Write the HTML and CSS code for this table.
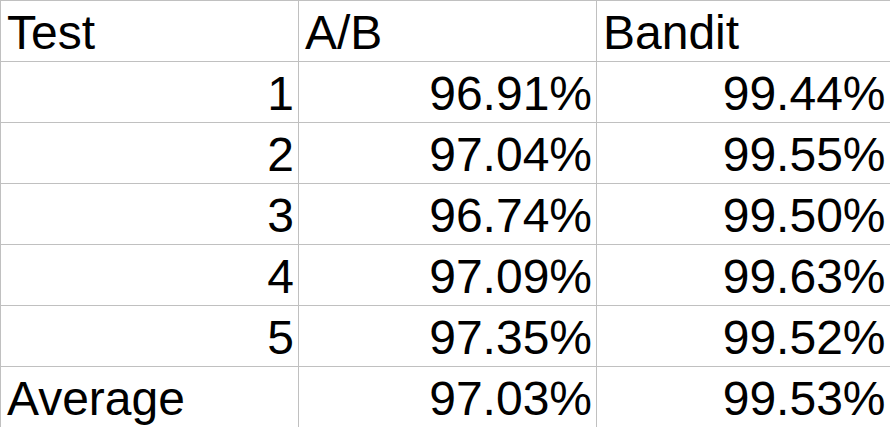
FILE: index.html
```html
<!DOCTYPE html>
<html>
<head>
<meta charset="utf-8">
<link rel="stylesheet" href="styles.css">
</head>
<body>
<table class="sheet">
  <colgroup><col class="col"><col class="col"><col class="col-last"></colgroup>
  <tr><td class="txt">Test</td><td class="txt">A/B</td><td class="txt">Bandit</td></tr>
  <tr><td class="num">1</td><td class="num">96.91%</td><td class="num">99.44%</td></tr>
  <tr><td class="num">2</td><td class="num">97.04%</td><td class="num">99.55%</td></tr>
  <tr><td class="num">3</td><td class="num">96.74%</td><td class="num">99.50%</td></tr>
  <tr><td class="num">4</td><td class="num">97.09%</td><td class="num">99.63%</td></tr>
  <tr><td class="num">5</td><td class="num">97.35%</td><td class="num">99.52%</td></tr>
  <tr><td class="txt">Average</td><td class="num">97.03%</td><td class="num">99.53%</td></tr>
</table>
</body>
</html>
```
FILE: styles.css
```css
html, body {
  margin: 0;
  padding: 0;
  background: #ffffff;
  overflow: hidden;
}
.sheet {
  border-collapse: collapse;
  table-layout: fixed;
  width: 889px;
  font-family: "Liberation Sans", Arial, sans-serif;
  font-size: 48px;
  color: #000000;
}
.col { width: 298px; }
.col-last { width: 293px; }
.sheet td {
  box-sizing: border-box;
  height: 61px;
  padding: 3px 4px 0 6px;
  line-height: 57px;
  border: 1px solid #c0c0c0;
  white-space: nowrap;
  overflow: hidden;
  vertical-align: top;
}
.sheet td:last-child { border-right: none; }
.txt { text-align: left; }
.num { text-align: right; }
```
